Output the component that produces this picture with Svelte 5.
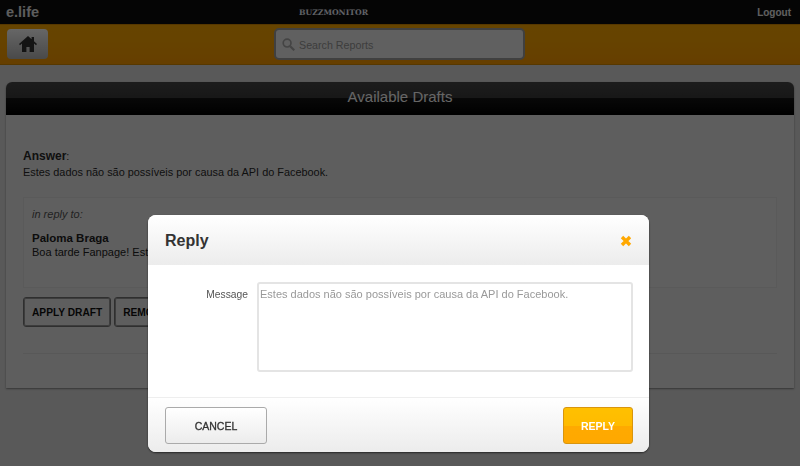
<script>
  const answer = 'Estes dados não são possíveis por causa da API do Facebook.';
</script>

<div class="page">
  <header class="topbar">
    <span class="brand">e.life</span>
    <span class="product">BUZZMONITOR</span>
    <span class="logout">Logout</span>
  </header>

  <div class="toolbar">
    <button class="home" aria-label="Home">
      <svg width="18" height="16" viewBox="0 0 18 16"><path d="M9 0 0 8l1 1.200L3 7.600V16h4.400v-5h3.200v5H15V7.600l2 1.600L18 8l-3-2.700V1h-2.400v2.200Z" fill="#333"/></svg>
    </button>
    <div class="search">
      <svg width="13" height="13" viewBox="0 0 14 14" fill="none" stroke="#aaa" stroke-width="1.800"><circle cx="5.500" cy="5.500" r="4.200"/><path d="m8.800 8.800 4.400 4.400" stroke-width="2.400"/></svg>
      <span>Search Reports</span>
    </div>
  </div>

  <main class="content">
    <section class="panel">
      <h2 class="panel__title">Available Drafts</h2>
      <div class="panel__body">
        <p class="answer"><b>Answer</b>:<br />{answer}</p>
        <div class="quote">
          <p class="quote__label">in reply to:</p>
          <p class="quote__name">Paloma Braga</p>
          <p class="quote__text">Boa tarde Fanpage! Est</p>
        </div>
        <div class="actions">
          <button class="action">APPLY DRAFT</button>
          <button class="action">REMOVE DRAFT</button>
        </div>
        <div class="rule"></div>
      </div>
    </section>
  </main>
</div>

<div class="overlay"></div>

<div class="modal">
  <div class="modal__head">
    <h3>Reply</h3>
    <svg class="close" width="12" height="12" viewBox="0 0 12 12"><path d="M2 2l8 8M10 2l-8 8" fill="none" stroke="#ffa800" stroke-width="3.400"/></svg>
  </div>
  <div class="modal__body">
    <span class="field-label">Message</span>
    <div class="textarea">{answer}</div>
  </div>
  <div class="modal__foot">
    <button class="btn btn--cancel">CANCEL</button>
    <button class="btn btn--reply">REPLY</button>
  </div>
</div>

<style>
  :global(body) { background: #dedede; overflow: hidden; }

  .page {
    height: 466px;
    font-family: "Liberation Sans", Arial, sans-serif;
    color: #333;
    overflow: hidden;
  }

  p, h2, h3 { margin: 0; }
  button { font-family: inherit; }

  .topbar {
    height: 24px;
    background: #0d0d0d;
    display: flex;
    align-items: center;
    justify-content: space-between;
    padding: 0 9px 0 6px;
  }

  .brand { width: 293px; font: bold 14.500px "Liberation Sans", sans-serif; color: #e8e8e8; }
  .product { font: bold 7.700px "DejaVu Serif", serif; color: #f0f4ff; }
  .logout { width: 423px; text-align: right; font: bold 10px "Liberation Sans", sans-serif; color: #f0f0f0; }

  .toolbar {
    position: relative;
    height: 41px;
    box-sizing: border-box;
    background: linear-gradient(#ffab00, #ffa600 50%, #ff9d00);
    border-top: 1px solid #d98c00;
    border-bottom: 1px solid #d98c00;
    padding: 4px 7px;
  }

  .home {
    width: 41px;
    height: 30px;
    padding: 0;
    display: flex;
    align-items: center;
    justify-content: center;
    border: 0;
    border-radius: 4px;
    background: linear-gradient(#ffffff, #b8b8b8);
  }

  .search {
    position: absolute;
    left: 274px;
    top: 3px;
    width: 251px;
    height: 32px;
    box-sizing: border-box;
    display: flex;
    align-items: center;
    gap: 4px;
    padding: 1px 0 0 6px;
    background: #f0f0f0;
    border: 2px solid #a0a0a0;
    border-radius: 5px;
    font-size: 10.700px;
    color: #999;
  }

  .content { padding: 17px 6px 0; }

  .panel {
    height: 306px;
    background: #ececec;
    box-shadow: 0 1px 2px rgba(0, 0, 0, .4);
    border-radius: 6px 6px 0 0;
  }

  .panel__title {
    height: 33px;
    line-height: 30px;
    text-align: center;
    font-size: 15px;
    font-weight: normal;
    color: #fff;
    border-radius: 6px 6px 0 0;
    background: linear-gradient(#484848 0, #3c3c3c 50%, #141414 50%, #000 100%);
  }

  .panel__body { padding: 33px 17px 0; }

  .answer { font-size: 10.900px; line-height: 16px; color: #2a2a2a; }
  .answer b { font-size: 12px; }

  .quote {
    margin-top: 17px;
    height: 91px;
    box-sizing: border-box;
    padding: 10px 8px;
    border: 1px solid #e0e0e0;
    background: #eeeeee;
    font-size: 11px;
  }

  .quote__label { font-style: italic; color: #555; }
  .quote__name { margin-top: 12px; font-weight: bold; font-size: 11.500px; color: #222; }
  .quote__text { margin-top: 2px; color: #222; }

  .actions { display: flex; gap: 3px; margin-top: 9px; }

  .action {
    height: 30px;
    padding: 0 8px;
    border: 1px solid #777;
    border-radius: 3px;
    background: #ececec;
    box-shadow: 0 0 0 1px #999 inset;
    font-size: 10.200px;
    font-weight: bold;
    color: #111;
  }

  .rule { margin-top: 26px; border-top: 1px solid #dcdcdc; }

  .overlay { position: fixed; inset: 0; background: rgba(0, 0, 0, .6); }

  .modal {
    position: fixed;
    left: 148px;
    top: 215px;
    width: 501px;
    height: 237px;
    display: flex;
    flex-direction: column;
    background: #fff;
    border-radius: 8px;
    box-shadow: 0 1px 2px rgba(0, 0, 0, .6);
    overflow: hidden;
    font-family: "Liberation Sans", Arial, sans-serif;
  }

  .modal__head {
    height: 50px;
    display: flex;
    align-items: center;
    justify-content: space-between;
    padding: 1px 17px 0;
    box-sizing: border-box;
    background: linear-gradient(#fff, #ececec);
  }

  .modal__head h3 { font-size: 16px; color: #333; }

  .modal__body {
    flex: 1;
    display: flex;
    gap: 8px;
    padding: 17px 16px 0 0;
  }

  .field-label {
    width: 100px;
    text-align: right;
    font-size: 10.300px;
    color: #555;
    padding-top: 7px;
  }

  .textarea {
    flex: 1;
    height: 90px;
    box-sizing: border-box;
    margin-left: 1px;
    padding: 4px 1px;
    border: 2px solid #e4e4e4;
    border-radius: 3px;
    font-size: 11px;
    color: #999;
  }

  .modal__foot {
    height: 55px;
    box-sizing: border-box;
    display: flex;
    justify-content: space-between;
    align-items: center;
    padding: 0 16px 0 17px;
    border-top: 1px solid #eee;
    background: linear-gradient(#fff, #ececec);
  }

  .btn {
    height: 37px;
    padding: 2px 0 0;
    border-radius: 3px;
    font-size: 10.500px;
    font-weight: normal;
  }

  .btn--cancel {
    width: 102px;
    border: 1px solid #aaa;
    background: linear-gradient(#fff, #ececec);
    color: #333;
    -webkit-text-stroke: .3px #333;
  }

  .btn--reply {
    width: 70px;
    border: 1px solid #d8950e;
    background: linear-gradient(#ffc000 0, #ffbb00 50%, #ffaa00 50%, #ffa800 100%);
    color: #fff;
    font-weight: bold;
  }
</style>
